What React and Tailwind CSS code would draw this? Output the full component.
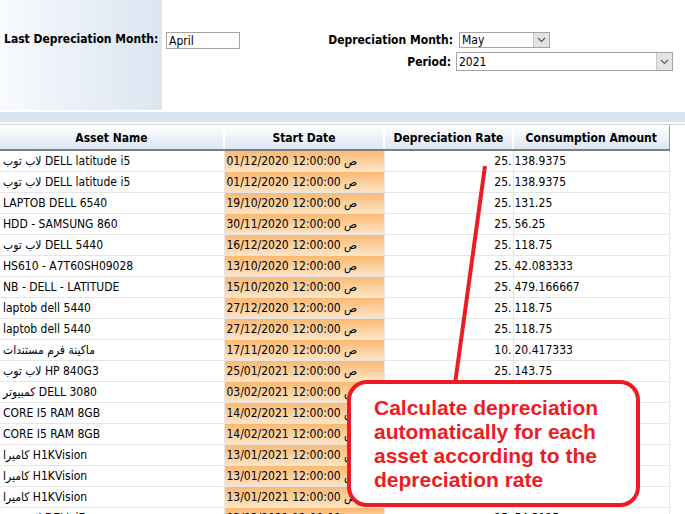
const rows = [
  { name: 'لاب توب DELL latitude i5', date: '01/12/2020 12:00:00 ص', rate: '25.', amount: '138.9375' },
  { name: 'لاب توب DELL latitude i5', date: '01/12/2020 12:00:00 ص', rate: '25.', amount: '138.9375' },
  { name: 'LAPTOB DELL 6540', date: '19/10/2020 12:00:00 ص', rate: '25.', amount: '131.25' },
  { name: 'HDD - SAMSUNG 860', date: '30/11/2020 12:00:00 ص', rate: '25.', amount: '56.25' },
  { name: 'لاب توب DELL 5440', date: '16/12/2020 12:00:00 ص', rate: '25.', amount: '118.75' },
  { name: 'HS610 - A7T60SH09028', date: '13/10/2020 12:00:00 ص', rate: '25.', amount: '42.083333' },
  { name: 'NB - DELL - LATITUDE', date: '15/10/2020 12:00:00 ص', rate: '25.', amount: '479.166667' },
  { name: 'laptob dell 5440', date: '27/12/2020 12:00:00 ص', rate: '25.', amount: '118.75' },
  { name: 'laptob dell 5440', date: '27/12/2020 12:00:00 ص', rate: '25.', amount: '118.75' },
  { name: 'ماكينة فرم مستندات', date: '17/11/2020 12:00:00 ص', rate: '10.', amount: '20.417333' },
  { name: 'لاب توب HP 840G3', date: '25/01/2021 12:00:00 ص', rate: '25.', amount: '143.75' },
  // rate / amount of the next rows sit behind the callout
  { name: 'كمبيوتر DELL 3080', date: '03/02/2021 12:00:00 ص', rate: '', amount: '' },
  { name: 'CORE I5 RAM 8GB', date: '14/02/2021 12:00:00 ص', rate: '', amount: '' },
  { name: 'CORE I5 RAM 8GB', date: '14/02/2021 12:00:00 ص', rate: '', amount: '' },
  { name: 'كاميرا H1KVision', date: '13/01/2021 12:00:00 ص', rate: '', amount: '' },
  { name: 'كاميرا H1KVision', date: '13/01/2021 12:00:00 ص', rate: '', amount: '' },
  { name: 'كاميرا H1KVision', date: '13/01/2021 12:00:00 ص', rate: '', amount: '' },
  { name: 'لاب توب DELL i7', date: '03/03/2021 12:00:00 ص', rate: '25.', amount: '54.3125' },
]

const font = "font-['DejaVu_Sans_Condensed','DejaVu_Sans',sans-serif]"

function Chevron() {
  return (
    <svg width="9" height="6" viewBox="0 0 9 6" fill="none">
      <path d="M1 1l3.5 3.5L8 1" stroke="#555" strokeWidth="1.1" />
    </svg>
  )
}

function Select({ value, width, height }) {
  return (
    <div className={`flex border border-[#a5a5a5] bg-white ${width} ${height}`}>
      <span className="flex flex-1 items-center pl-[2px] text-[12px] text-black">{value}</span>
      <span className="flex w-[16px] items-center justify-center border-l border-[#c8c8c8] bg-[#e3e3e3]">
        <Chevron />
      </span>
    </div>
  )
}

export default function App() {
  return (
    <div className={`relative h-[514px] w-[685px] overflow-hidden bg-white text-black ${font}`}>
      {/* Filter header */}
      <div className="flex h-[111px]">
        <div className="h-[110px] w-[162px] bg-linear-to-r from-[#f8fafd] to-[#dbe5f1] pl-[4px] pt-[31px]">
          <div className="whitespace-nowrap text-[12px] font-bold leading-[16px]">Last Depreciation Month:</div>
        </div>
        <div className="ml-[4px] mt-[32px] flex h-[17px] w-[74px] items-center border border-[#a5a5a5] pl-[2px] text-[12px]">
          April
        </div>
        <div className="flex flex-col pt-[31px]">
          <div className="flex items-center">
            <span className="w-[213px] whitespace-nowrap text-right text-[12px] font-bold">Depreciation Month:</span>
            <div className="ml-[6px]">
              <Select value="May" width="w-[91px]" height="h-[16px]" />
            </div>
          </div>
          <div className="mt-[3px] flex items-center">
            <span className="w-[211px] text-right text-[12px] font-bold">Period:</span>
            <div className="ml-[5px]">
              <Select value="2021" width="w-[217px]" height="h-[19px]" />
            </div>
          </div>
        </div>
      </div>

      <div className="mt-[1px] h-[10px] bg-[#d7e3f2]" />
      <div className="mt-[2px] h-px bg-[#d6d6d6]" />

      {/* Assets table */}
      <table className="mt-[1px] w-[669px] table-fixed border-collapse text-[12px]">
        <colgroup>
          <col className="w-[224px]" />
          <col className="w-[160px]" />
          <col className="w-[129px]" />
          <col className="w-[156px]" />
        </colgroup>
        <thead>
          <tr className="h-[24px] bg-linear-to-b from-white to-[#dbe5f2]">
            {['Asset Name', 'Start Date', 'Depreciation Rate', 'Consumption Amount'].map((h, i) => (
              <th
                key={h}
                className={`border-b-2 border-b-[#7d7d7d] p-0 text-center text-[12px] font-bold ${i < 3 ? 'border-r-2 border-r-white' : 'border-r border-r-[#9a9a9a]'}`}
              >
                {h}
              </th>
            ))}
          </tr>
        </thead>
        <tbody>
          {rows.map((r, i) => (
            <tr key={i} className="h-[21px]">
              <td className="truncate border-b border-r border-[#e6e6e6] p-0 px-[3px] text-left">{r.name}</td>
              <td className="border-b border-r border-[#e6e6e6] p-0">
                <div className="h-[20px] truncate bg-linear-to-b from-[#fbb970] to-[#fde4c6] pl-[2px] leading-[20px]">
                  {r.date}
                </div>
              </td>
              <td className="border-b border-r border-[#e6e6e6] p-0 pr-[1px] text-right">{r.rate}</td>
              <td className="border-b border-r border-[#e6e6e6] p-0 pl-[1px] text-left">{r.amount}</td>
            </tr>
          ))}
        </tbody>
      </table>

      {/* Annotation overlay */}
      <svg className="absolute left-0 top-0" width="685" height="514">
        <line x1="485" y1="166" x2="455" y2="384" stroke="#ed1c24" strokeWidth="4" />
      </svg>
      <div className="absolute left-[347px] top-[380px] h-[127px] w-[293px] rounded-[20px] border-4 border-[#ed1c24] bg-white pl-[23px] pt-[12px]">
        <p className="whitespace-nowrap font-['Liberation_Sans',Arial,sans-serif] text-[21px] font-bold leading-[24px] text-[#ed1c24]">
          Calculate depreciation
          <br />
          automatically for each
          <br />
          asset according to the
          <br />
          depreciation rate
        </p>
      </div>
    </div>
  )
}
